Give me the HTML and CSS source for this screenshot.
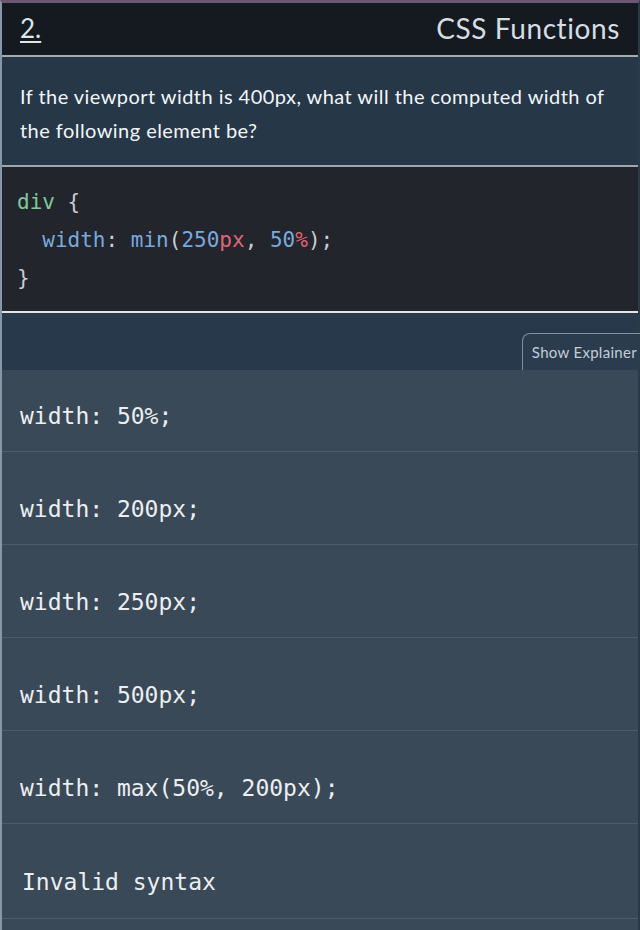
FILE: index.html
```html
<!DOCTYPE html>
<html lang="en">
<head>
<meta charset="utf-8">
<title>CSS Functions</title>
<link rel="stylesheet" href="styles.css">
</head>
<body>
<div class="card">
  <header class="head">
    <span class="num">2.</span>
    <span class="topic">CSS Functions</span>
  </header>
  <section class="question">
    <p>If the viewport width is 400px, what will the computed width of the following element be?</p>
  </section>
  <pre class="code"><code><span class="sel">div</span> <span class="pun">{</span>
  <span class="prop">width</span><span class="pun">:</span> <span class="fn">min</span><span class="pun">(</span><span class="numv">250</span><span class="unit">px</span><span class="pun">,</span> <span class="numv">50</span><span class="unit">%</span><span class="pun">);</span>
<span class="pun">}</span></code></pre>
  <div class="toolbar">
    <button class="explain">Show Explainer</button>
  </div>
  <ul class="answers">
    <li class="answer first">width: 50%;</li>
    <li class="answer">width: 200px;</li>
    <li class="answer">width: 250px;</li>
    <li class="answer">width: 500px;</li>
    <li class="answer">width: max(50%, 200px);</li>
    <li class="answer invalid">Invalid syntax</li>
  </ul>
</div>
</body>
</html>
```

FILE: styles.css
```css
html, body {
  margin: 0;
  padding: 0;
  background: #3a4957;
}
body {
  width: 640px;
  height: 930px;
  overflow: hidden;
  font-family: "Lato", "Open Sans", sans-serif;
}
.card {
  border-top: 3px solid #6a5872;
  border-left: 2px solid #8797a4;
  border-right: 2px solid #2c3a46;
  background: #3a4957;
  min-height: 927px;
}
.head {
  height: 54px;
  box-sizing: border-box;
  background: #141a20;
  display: flex;
  align-items: center;
  justify-content: space-between;
  padding: 0 18px 2px 18px;
  border-bottom: 2px solid #a3acb3;
  color: #dfe5ea;
}
.num {
  font-size: 26px;
  text-decoration: underline;
  text-underline-offset: 3px;
  text-decoration-thickness: 2px;
}
.topic {
  font-size: 28px;
  letter-spacing: 0.6px;
  font-weight: 400;
  color: #d6dde3;
}
.question {
  background: #263747;
  padding: 22px 18px 18px;
  border-bottom: 2px solid #9ca6ae;
}
.question p {
  margin: 0;
  font-size: 20px;
  letter-spacing: 0.45px;
  line-height: 34px;
  color: #f2f5f7;
}
.code {
  margin: 0;
  background: #22252b;
  padding: 16px 15px 14px;
  border-bottom: 2px solid #e2e4e6;
  font-family: "DejaVu Sans Mono", monospace;
  font-size: 21px;
  line-height: 38px;
  color: #c9ccd0;
}
.sel { color: #7fc99a; }
.prop { color: #7aa9dd; }
.fn { color: #7aa9dd; }
.numv { color: #7aa9dd; }
.unit { color: #e06478; }
.pun { color: #c9ccd0; }
.toolbar {
  height: 57px;
  box-sizing: border-box;
  background: #27394a;
  display: flex;
  justify-content: flex-end;
  align-items: flex-end;
}
.explain {
  height: 37px;
  box-sizing: border-box;
  padding: 0 3px 0 9px;
  margin: 0 -2px 0 0;
  background: #2a3c4d;
  border: 1px solid #7f8f9c;
  border-bottom: none;
  border-right: none;
  border-radius: 8px 0 0 0;
  color: #c3ced8;
  font-family: "Lato", "Open Sans", sans-serif;
  font-size: 15px;
  letter-spacing: 0.3px;
}
.answers {
  list-style: none;
  margin: 0;
  padding: 0;
}
.answer {
  padding: 43px 18px 21px;
  line-height: 28px;
  font-family: "DejaVu Sans Mono", monospace;
  font-size: 23px;
  color: #eceff1;
  border-bottom: 1px solid #4b5c6a;
  background: #3a4957;
}
.answer.first {
  padding-top: 32px;
}
.answer.invalid {
  padding-left: 20px;
  padding-top: 44px;
  padding-bottom: 22px;
}
```
